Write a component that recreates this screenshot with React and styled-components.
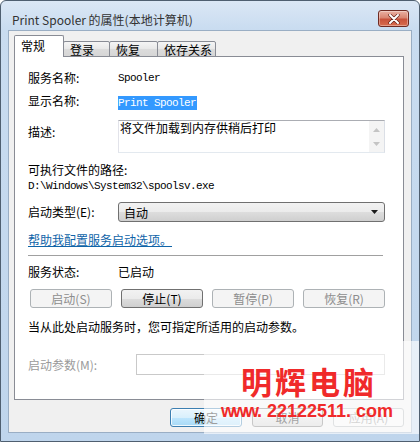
import React from "react";
import styled, { createGlobalStyle } from "styled-components";

const UI = `"Noto Sans CJK SC", "Noto Sans", sans-serif`;
const MONO = `"Liberation Mono", "DejaVu Sans Mono", monospace`;

const Global = createGlobalStyle`
  html, body { margin: 0; padding: 0; background: #ffffff; }
  body { font-family: ${UI}; font-size: 12px; color: #000; }
  * { box-sizing: border-box; }
`;

const Window = styled.div`
  position: relative;
  width: 420px;
  height: 442px;
  border: 1px solid #4f5f70;
  border-radius: 6px 6px 0 0;
  background: linear-gradient(#dbe7f5 0px, #c9dcf0 28px, #bfd5ec 100%);
  display: flex;
  flex-direction: column;
  overflow: hidden;
`;

const TitleBar = styled.div`
  height: 29px;
  display: flex;
  align-items: flex-start;
  justify-content: space-between;
  padding: 0 10px 0 11px;
`;

const Title = styled.div`
  font-family: ${UI};
  font-size: 12px;
  line-height: 16px;
  margin-top: 11px;
  color: #333333;
`;

const CloseButton = styled.div`
  margin-top: 9px;
  width: 31px;
  height: 17px;
  border: 1px solid #6e2a22;
  border-radius: 3px;
  background: linear-gradient(#eab1a3 0%, #d98672 45%, #c8523b 55%, #d86c4e 100%);
  box-shadow: inset 0 0 0 1px rgba(255, 255, 255, 0.35);
  display: flex;
  align-items: center;
  justify-content: center;
`;

const Client = styled.div`
  margin: 0 7px;
  height: 403px;
  border: 1px solid #9aaec4;
  background: #f0f0f0;
  padding: 4px 7px 0 5px;
  display: flex;
  flex-direction: column;
`;

const TabRow = styled.div`
  display: flex;
  align-items: flex-end;
  height: 22px;
  position: relative;
  z-index: 1;
  margin-bottom: -1px;
`;

const Tab = styled.div`
  width: ${(p) => p.$w}px;
  height: ${(p) => (p.$active ? 22 : 16)}px;
  border: 1px solid #898c95;
  border-bottom: ${(p) => (p.$active ? "none" : "1px solid #898c95")};
  margin-left: ${(p) => (p.$first ? 0 : -1)}px;
  background: ${(p) =>
    p.$active ? "#ffffff" : "linear-gradient(#f5f5f5, #e8e8e8 50%, #dcdcdc 51%, #d6d6d6)"};
  border-radius: 2px 2px 0 0;
  font-family: ${UI};
  font-size: 12px;
  line-height: 14px;
  padding: ${(p) => (p.$active ? "3px 0 0 6px" : "1px 0 0 6px")};
  color: #000;
`;

const Panel = styled.div`
  height: 344px;
  border: 1px solid #898c95;
  background: #ffffff;
  padding: 13px 18px 0 13px;
  display: flex;
  flex-direction: column;
`;

const Row = styled.div`
  display: grid;
  grid-template-columns: ${(p) => p.$label || 90}px 1fr;
  align-items: ${(p) => p.$align || "center"};
  margin-top: ${(p) => p.$mt || 0}px;
`;

const Label = styled.div`
  font-family: ${UI};
  font-size: 12px;
  line-height: 16px;
  color: ${(p) => (p.$disabled ? "#9a9a9a" : "#000")};
  padding-top: ${(p) => p.$pt || 0}px;
`;

const Text = styled.div`
  font-family: ${UI};
  font-size: 12px;
  line-height: 16px;
  margin-top: ${(p) => p.$mt || 0}px;
`;

const Mono = styled.div`
  font-family: ${MONO};
  font-size: 11px;
  letter-spacing: -0.6px;
  line-height: 16px;
  margin-top: ${(p) => p.$mt || 0}px;
`;

const Selected = styled.span`
  display: inline-block;
  font-family: ${MONO};
  font-size: 11px;
  letter-spacing: -0.6px;
  line-height: 14px;
  background: #3399ff;
  color: #ffffff;
  padding: 0 1px 0 0;
`;

const TextArea = styled.div`
  height: 33px;
  border: 1px solid #abadb3;
  border-color: #abadb3 #dbdfe6 #e3e9ef #e2e3ea;
  display: flex;
  justify-content: space-between;
`;

const AreaText = styled.div`
  font-family: ${UI};
  font-size: 12px;
  line-height: 14px;
  padding: 0 0 0 1px;
`;

const ScrollBar = styled.div`
  width: 15px;
  background: #f4f4f4;
  display: flex;
  flex-direction: column;
  justify-content: space-between;
  align-items: center;
  padding: 7px 0 6px;
`;

const Select = styled.div`
  height: 20px;
  border: 1px solid #707070;
  border-radius: 3px;
  background: linear-gradient(#f2f2f2 0%, #ebebeb 50%, #dddddd 51%, #cfcfcf 100%);
  display: flex;
  align-items: center;
  justify-content: space-between;
  padding: 0 6px 0 5px;
  font-family: ${UI};
  font-size: 12px;
`;

const Link = styled.div`
  font-family: ${UI};
  font-size: 12px;
  line-height: 16px;
  color: #0f64a8;
  text-decoration: underline;
  margin-top: 10px;
`;

const Separator = styled.div`
  height: 1px;
  background: #a0a0a0;
  margin: 7px 2px 0 0;
`;

const ButtonGrid = styled.div`
  display: grid;
  grid-template-columns: repeat(4, 1fr);
  gap: 9px;
  padding-left: 2px;
  margin-top: 9px;
`;

const Button = styled.div`
  height: 19px;
  border: 1px solid ${(p) => (p.$disabled ? "#adb2b5" : p.$default ? "#3c7fb1" : "#707070")};
  border-radius: 3px;
  background: ${(p) =>
    p.$disabled
      ? "#f4f4f4"
      : p.$default
      ? "linear-gradient(#eaf6fd 0%, #d9f0fc 50%, #bee6fd 51%, #a7d9f5 100%)"
      : "linear-gradient(#f2f2f2 0%, #ebebeb 50%, #dddddd 51%, #cfcfcf 100%)"};
  box-shadow: ${(p) => (p.$default ? "inset 0 0 0 1px rgba(255,255,255,0.8)" : "none")};
  color: ${(p) => (p.$disabled ? "#8d8d8d" : "#000")};
  font-family: ${UI};
  font-size: 12px;
  display: flex;
  align-items: center;
  justify-content: center;
  width: ${(p) => (p.$w ? `${p.$w}px` : "auto")};
`;

const Input = styled.div`
  height: 21px;
  border: 1px solid #c9c9c9;
  background: #ffffff;
`;

const Footer = styled.div`
  display: flex;
  justify-content: flex-end;
  gap: 10px;
  margin-top: 8px;
`;

const Watermark = styled.div`
  position: absolute;
  left: 203px;
  top: 340px;
  width: 217px;
  height: 93px;
  background: rgba(255, 255, 255, 0.62);
`;

const WmBig = styled.div`
  position: absolute;
  left: 37px;
  top: 22px;
  font-family: ${UI};
  font-weight: 700;
  font-size: 31px;
  line-height: 36px;
  letter-spacing: 3px;
  color: #f02a2a;
`;

const WmUrl = styled.div`
  position: absolute;
  left: 17px;
  top: 59px;
  font-family: "Liberation Sans", Arial, sans-serif;
  font-weight: 700;
  font-size: 18px;
  line-height: 22px;
  color: #f02a2a;
  white-space: nowrap;
`;

const Narrow = styled.span`
  letter-spacing: -2px;
`;

function Tri({ up, color }) {
  return (
    <svg width="7" height="4" viewBox="0 0 7 4">
      <path d={up ? "M0 4 L3.5 0 L7 4 Z" : "M0 0 L7 0 L3.5 4 Z"} fill={color} />
    </svg>
  );
}

export default function App() {
  return (
    <>
      <Global />
      <Window>
        <TitleBar>
          <Title>Print Spooler 的属性(本地计算机)</Title>
          <CloseButton>
            <svg width="12" height="10" viewBox="0 0 12 10">
              <path d="M2 1 L10 9 M10 1 L2 9" stroke="#5a1a12" strokeWidth="3.2" strokeLinecap="round" />
              <path d="M2 1 L10 9 M10 1 L2 9" stroke="#ffffff" strokeWidth="2" strokeLinecap="round" />
            </svg>
          </CloseButton>
        </TitleBar>
        <Client>
          <TabRow>
            <Tab $w={50} $active $first>常规</Tab>
            <Tab $w={47}>登录</Tab>
            <Tab $w={49}>恢复</Tab>
            <Tab $w={59}>依存关系</Tab>
          </TabRow>
          <Panel>
            <Row>
              <Label>服务名称:</Label>
              <Mono>Spooler</Mono>
            </Row>
            <Row $mt={6}>
              <Label>显示名称:</Label>
              <div>
                <Selected>Print Spooler</Selected>
              </div>
            </Row>
            <Row $mt={10} $align="start">
              <Label $pt={4}>描述:</Label>
              <TextArea>
                <AreaText>将文件加载到内存供稍后打印</AreaText>
                <ScrollBar>
                  <Tri up color="#c4c4c4" />
                  <Tri color="#c4c4c4" />
                </ScrollBar>
              </TextArea>
            </Row>
            <Text $mt={9}>可执行文件的路径:</Text>
            <Mono>D:\Windows\System32\spoolsv.exe</Mono>
            <Row $mt={8}>
              <Label>启动类型(E):</Label>
              <Select>
                <span>自动</span>
                <Tri color="#1a1a1a" />
              </Select>
            </Row>
            <Link>帮助我配置服务启动选项。</Link>
            <Separator />
            <Row $mt={8}>
              <Label>服务状态:</Label>
              <Text>已启动</Text>
            </Row>
            <ButtonGrid>
              <Button $disabled>启动(S)</Button>
              <Button>停止(T)</Button>
              <Button $disabled>暂停(P)</Button>
              <Button $disabled>恢复(R)</Button>
            </ButtonGrid>
            <Text $mt={11}>当从此处启动服务时，您可指定所适用的启动参数。</Text>
            <Row $mt={19} $label={108}>
              <Label $disabled>启动参数(M):</Label>
              <Input />
            </Row>
          </Panel>
          <Footer>
            <Button $default $w={72}>确定</Button>
            <Button $w={71}>取消</Button>
            <Button $disabled $w={71}>应用(A)</Button>
          </Footer>
        </Client>
        <Watermark>
          <WmBig>明辉电脑</WmBig>
          <WmUrl>
            <Narrow>www</Narrow>. 22122511. com
          </WmUrl>
        </Watermark>
      </Window>
    </>
  );
}
